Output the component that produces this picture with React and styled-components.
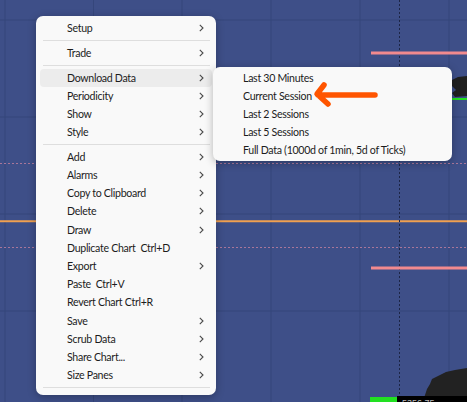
import React from 'react';
import styled, { createGlobalStyle } from 'styled-components';

const GlobalStyle = createGlobalStyle`
  html, body {
    margin: 0;
    padding: 0;
    background: #3e4f88;
  }
  body {
    font-family: Lato, "Noto Sans", sans-serif;
  }
`;

const Stage = styled.div`
  position: relative;
  width: 467px;
  height: 402px;
  overflow: hidden;
  background: #3e4f88;
`;

const ChartSvg = styled.svg`
  display: block;
`;

const Menu = styled.div`
  position: absolute;
  left: ${(p) => p.x}px;
  top: ${(p) => p.y}px;
  width: ${(p) => p.w}px;
  box-sizing: border-box;
  padding: ${(p) => p.pad};
  background: #f9f9f9;
  border-radius: 7px;
  box-shadow: 0 2px 8px rgba(0, 0, 0, 0.28);
  display: flex;
  flex-direction: column;
`;

const Row = styled.div`
  display: flex;
  align-items: center;
  height: ${(p) => p.h || 18}px;
  padding-left: ${(p) => p.indent}px;
  padding-right: 8px;
  border-radius: 4px;
  background: ${(p) => (p.active ? '#ececec' : 'transparent')};
  font-size: 10.6px;
  letter-spacing: -0.3px;
  color: #1c1c1c;
  white-space: nowrap;
`;

const Label = styled.span`
  flex: 1;
  white-space: pre;
`;

const Chevron = styled.svg`
  flex: none;
`;

const Separator = styled.div`
  height: 1px;
  margin: 3px 2px 3px 3px;
  background: #dedede;
`;

const Arrow = styled.svg`
  position: absolute;
  left: 308px;
  top: 78px;
`;

const mainItems = [
  ['Setup', true], '-',
  ['Trade', true], '-',
  ['Download Data', true, true],
  ['Periodicity', true],
  ['Show', true],
  ['Style', true], '-',
  ['Add', true],
  ['Alarms', true],
  ['Copy to Clipboard', true],
  ['Delete', true],
  ['Draw', true],
  ['Duplicate Chart  Ctrl+D', false],
  ['Export', true],
  ['Paste  Ctrl+V', false],
  ['Revert Chart Ctrl+R', false],
  ['Save', true],
  ['Scrub Data', true],
  ['Share Chart...', true],
  ['Size Panes', true], '-',
];

const subItems = [
  'Last 30 Minutes',
  'Current Session',
  'Last 2 Sessions',
  'Last 5 Sessions',
  'Full Data (1000d of 1min, 5d of Ticks)',
];

const ChevronIcon = () => (
  <Chevron width="5" height="8" viewBox="0 0 5 8">
    <path d="M0.8 0.8 L4 4 L0.8 7.2" fill="none" stroke="#4a4a4a" strokeWidth="1.1" />
  </Chevron>
);

const Chart = () => {
  const vx = [5, 93.5, 182, 271, 360, 449];
  const hy = [20, 117, 214, 311];
  return (
    <ChartSvg width="467" height="402" viewBox="0 0 467 402">
      <rect width="467" height="402" fill="#3e4f88" />
      {vx.map((x) => (
        <line key={`v${x}`} x1={x} y1="0" x2={x} y2="402" stroke="#35467b" strokeWidth="1" />
      ))}
      {hy.map((y) => (
        <line key={`h${y}`} x1="0" y1={y} x2="467" y2={y} stroke="#35467b" strokeWidth="1" />
      ))}
      <line x1="0" y1="163.5" x2="467" y2="163.5" stroke="#a8769a" strokeWidth="1" strokeDasharray="2 2" />
      <line x1="0" y1="247.5" x2="467" y2="247.5" stroke="#a8769a" strokeWidth="1" strokeDasharray="2 2" />
      <line x1="0" y1="221.3" x2="467" y2="221.3" stroke="#f0a050" strokeWidth="2" />
      <line x1="399.5" y1="0" x2="399.5" y2="402" stroke="#1c2546" strokeWidth="1" strokeDasharray="2 2" />
      <line x1="371" y1="53" x2="467" y2="53" stroke="#f28a8e" strokeWidth="3" />
      <line x1="371" y1="268" x2="467" y2="268" stroke="#f28a8e" strokeWidth="3" />
      <path d="M452 80 L458 77 L467 76 L467 96 L455 97 L452 93 L456 90 L452 86 Z" fill="#202020" />
      <line x1="452" y1="99" x2="467" y2="99" stroke="#22e022" strokeWidth="2" />
      <path d="M467 368 L455 370 L446 372 L440 375 L432 379 L430 384 L427 389 L425 395 L423 402 L467 402 Z" fill="#222222" />
      <rect x="370" y="397" width="27" height="5" fill="#22e022" />
      <rect x="397" y="396" width="70" height="6" fill="#000000" />
      <text x="402" y="406" fontSize="9" fill="#bbbbbb" fontFamily="Liberation Sans, sans-serif">5356.75</text>
    </ChartSvg>
  );
};

export default function App() {
  return (
    <>
      <GlobalStyle />
      <Stage>
        <Chart />
        <Menu x={36} y={16} w={180} pad="3px 4px 4px 4px">
          {mainItems.map((it, i) => {
            if (it === '-') return <Separator key={`s${i}`} />;
            const [label, sub, active] = it;
            return (
              <Row key={label} indent={27} active={active} h={i > 9 ? 18.2 : 18}>
                <Label>{label}</Label>
                {sub && <ChevronIcon />}
              </Row>
            );
          })}
        </Menu>
        <Menu x={213} y={67} w={239} pad="2px 4px">
          {subItems.map((label) => (
            <Row key={label} indent={26}>
              <Label>{label}</Label>
            </Row>
          ))}
        </Menu>
        <Arrow width="72" height="32" viewBox="0 0 72 32">
          <path
            d="M67 17 L10 17 M16 7 L9 16 L20 26"
            fill="none"
            stroke="#ff5500"
            strokeWidth="5.5"
            strokeLinecap="round"
            strokeLinejoin="round"
          />
        </Arrow>
      </Stage>
    </>
  );
}
